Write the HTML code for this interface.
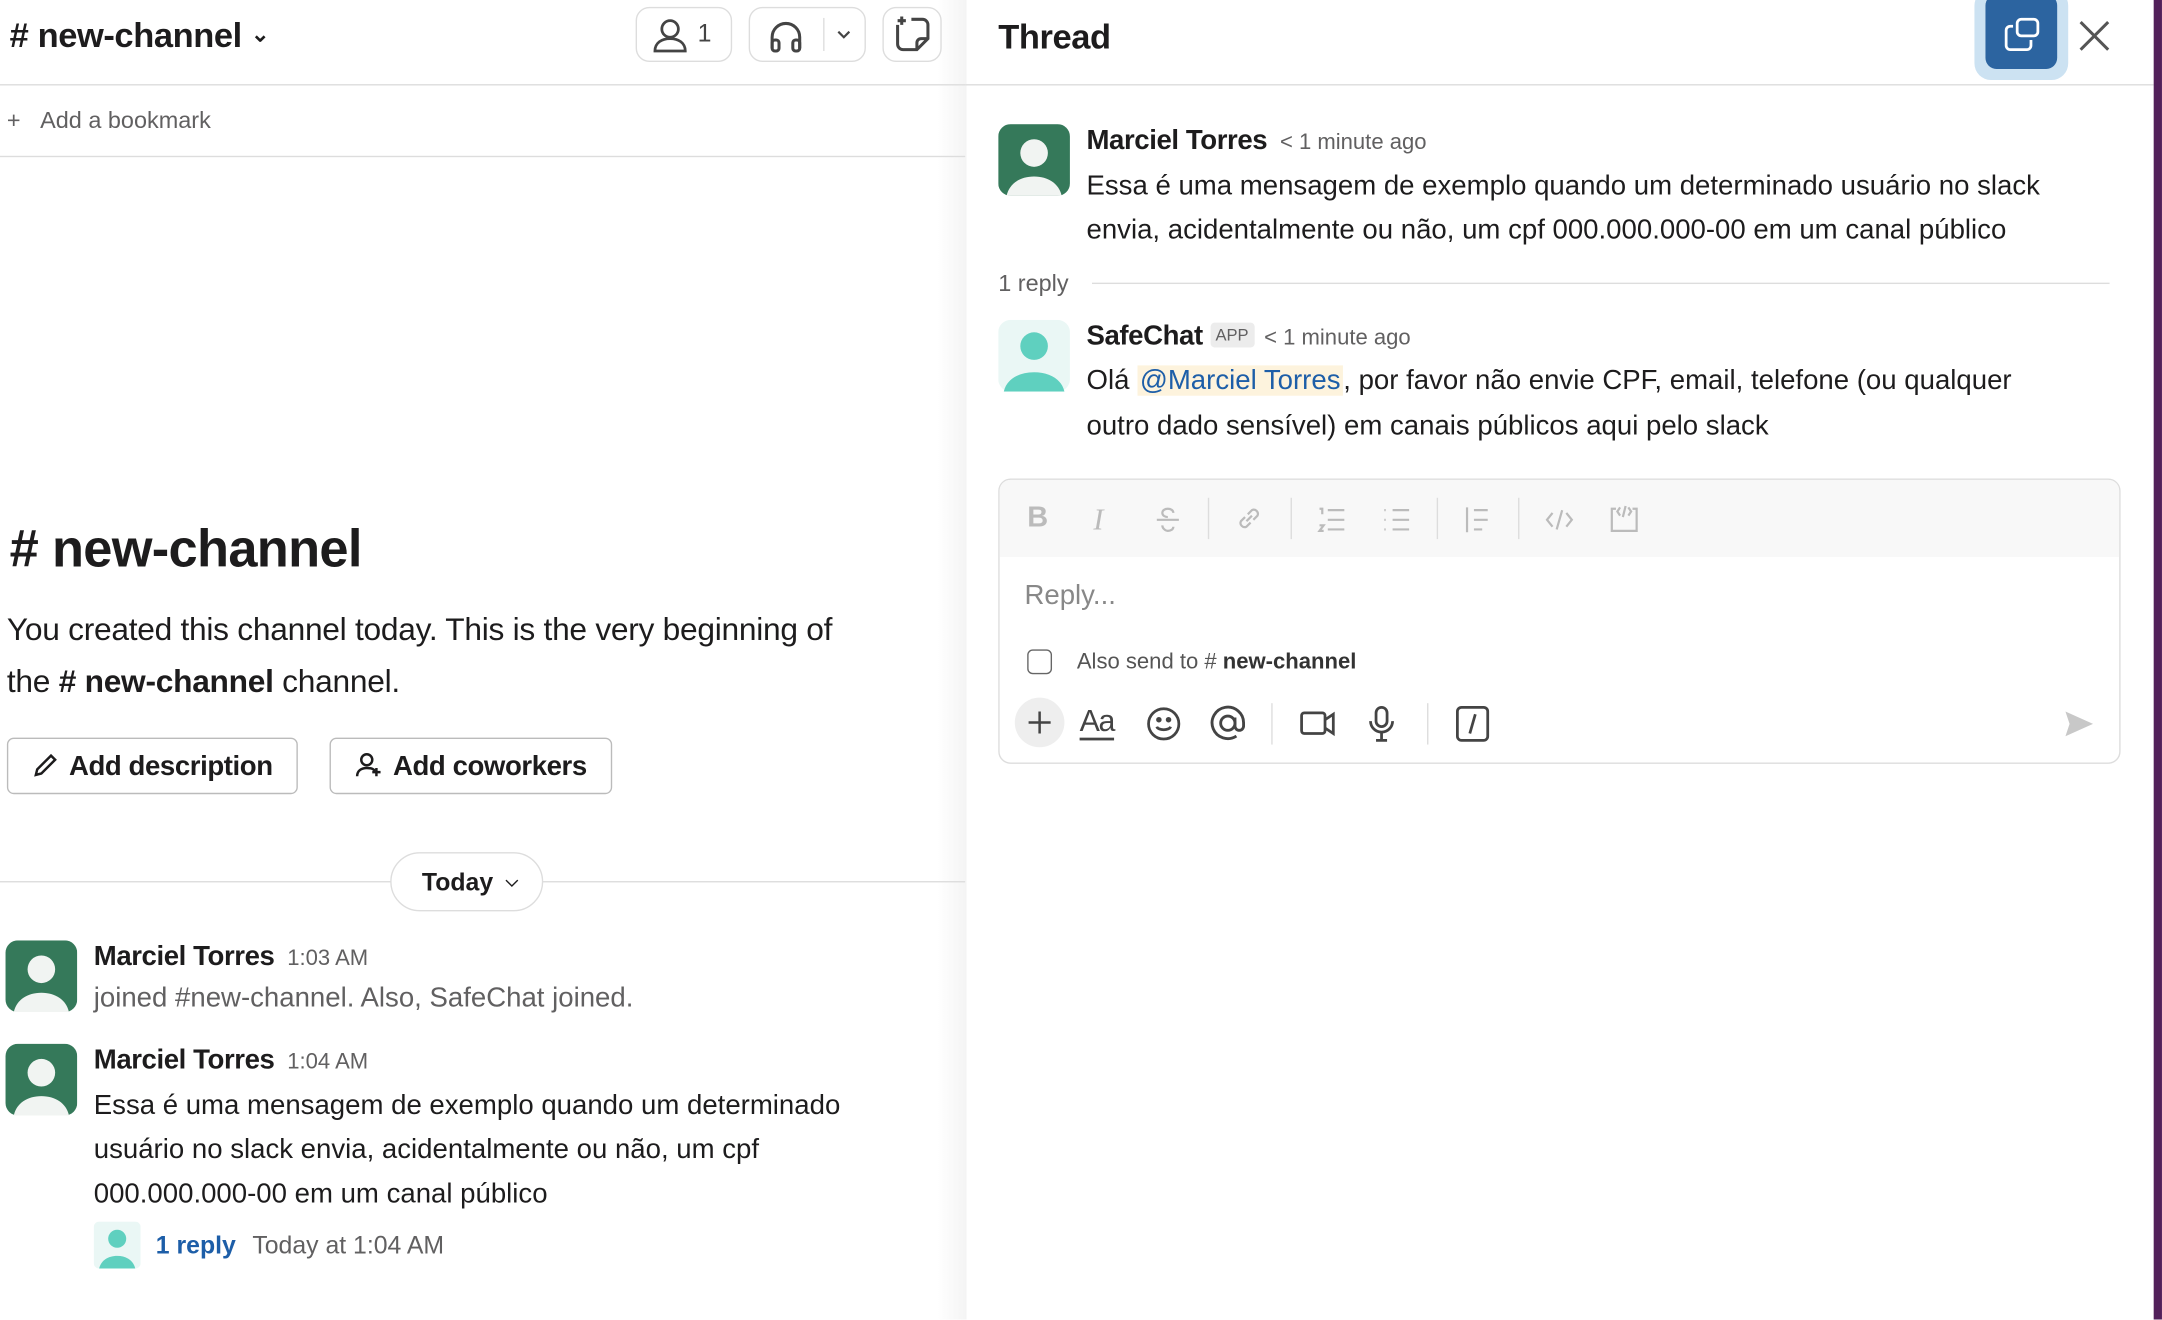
<!DOCTYPE html>
<html><head><meta charset="utf-8">
<style>
html,body{margin:0;padding:0;width:2162px;height:1320px;overflow:hidden;background:#fff}
#w{position:absolute;left:0;top:0;width:1568px;height:957px;transform:scale(1.3788);transform-origin:0 0;font-family:"Liberation Sans",sans-serif;color:#1d1c1d}
.a{position:absolute;white-space:nowrap}
.b{font-weight:bold}
.g{color:#616061}
.btn{position:absolute;border:1px solid #ddd;border-radius:10px;box-sizing:border-box}
.av{position:absolute}
</style></head><body><div id="w">
<div class="a" style="left:680px;top:0;width:21px;height:957px;background:linear-gradient(90deg,#fff,#f4f4f4)"></div>
<div class="a" style="left:0;top:61px;width:700px;height:1px;background:#ddd"></div>
<div class="a" style="left:0;top:113px;width:700px;height:1px;background:#ddd"></div>
<div class="a b" style="left:7px;top:12px;font-size:25px;letter-spacing:-0.3px">#&nbsp;new-channel <span style="font-size:16px;position:relative;top:-4px">&#x2304;</span></div>
<div class="btn" style="left:461px;top:5px;width:70px;height:40px"></div>
<svg class="a" style="left:472px;top:12px" width="28" height="28" viewBox="0 0 28 28" fill="none" stroke="#444" stroke-width="2"><circle cx="14" cy="9" r="6"/><path d="M3 25c0-6 5-9 11-9s11 3 11 9z"/></svg>
<div class="a" style="left:506px;top:14px;font-size:18px;color:#444">1</div>
<div class="btn" style="left:543px;top:5px;width:85px;height:40px"></div>
<svg class="a" style="left:555px;top:11px" width="30" height="30" viewBox="0 0 30 30" fill="none" stroke="#444" stroke-width="2.2"><path d="M5 24v-8a10 10 0 0 1 20 0v8"/><rect x="5" y="18" width="5" height="8" rx="2"/><rect x="20" y="18" width="5" height="8" rx="2"/></svg>
<div class="a" style="left:597px;top:13px;width:1px;height:24px;background:#ddd"></div>
<svg class="a" style="left:606px;top:20px" width="12" height="10" viewBox="0 0 12 10" fill="none" stroke="#444" stroke-width="1.6"><path d="M2 3l4 4 4-4"/></svg>
<div class="btn" style="left:640px;top:5px;width:43px;height:40px"></div>
<svg class="a" style="left:647px;top:10px" width="30" height="30" viewBox="0 0 30 30" fill="none" stroke="#444" stroke-width="2.2"><path d="M4 8v14a4 4 0 0 0 4 4h10l8-8V8a4 4 0 0 0-4-4h-8M18 26v-5a3 3 0 0 1 3-3h5M7 2v6M4 5h6"/></svg>
<div class="a g" style="left:5px;top:78px;font-size:17px">+&nbsp;&nbsp;&nbsp;Add a bookmark</div>
<div class="a b" style="left:7px;top:378px;font-size:38px;letter-spacing:-0.5px">#&nbsp;new-channel</div>
<div class="a" style="left:5px;top:437px;font-size:23px;line-height:38px;white-space:normal;width:690px;letter-spacing:-0.2px">You created this channel today. This is the very beginning of<br>the <b>#&nbsp;new-channel</b> channel.</div>
<div class="btn" style="left:5px;top:535px;width:211px;height:41px;border:1px solid #bbb;border-radius:5px"></div>
<svg class="a" style="left:23px;top:545px" width="20" height="20" viewBox="0 0 20 20" fill="none" stroke="#1d1c1d" stroke-width="1.8"><path d="M3 17l1-4L14 3l3 3L7 16z"/></svg>
<div class="a b" style="left:50px;top:545px;font-size:20px;letter-spacing:-0.3px">Add description</div>
<div class="btn" style="left:239px;top:535px;width:205px;height:41px;border:1px solid #bbb;border-radius:5px"></div>
<svg class="a" style="left:257px;top:544px" width="22" height="22" viewBox="0 0 22 22" fill="none" stroke="#1d1c1d" stroke-width="1.8"><circle cx="9" cy="7" r="4"/><path d="M2 19c0-4 3-6 7-6s5 1 6 2M16 13v6M13 16h6"/></svg>
<div class="a b" style="left:285px;top:545px;font-size:20px;letter-spacing:-0.3px">Add coworkers</div>
<div class="a" style="left:0;top:639px;width:700px;height:1px;background:#ddd"></div>
<div class="btn" style="left:283px;top:618px;width:111px;height:43px;border-radius:22px;background:#fff"></div>
<div class="a b" style="left:306px;top:630px;font-size:18px">Today <span style="font-size:12px;position:relative;top:-3px;margin-left:4px">&#x2335;</span></div>

<svg class="av" style="left:4px;top:682px" width="52" height="52" viewBox="0 0 52 52"><rect width="52" height="52" rx="9" fill="#35795a"/><circle cx="26" cy="21" r="10" fill="#f1f4f2"/><path d="M6 52c2-9 10-14 20-14s18 5 20 14z" fill="#f1f4f2"/></svg>
<div class="a b" style="left:68px;top:683px;font-size:20px;letter-spacing:-0.3px">Marciel Torres <span class="g" style="font-weight:normal;font-size:16px;margin-left:4px;letter-spacing:0">1:03 AM</span></div>
<div class="a g" style="left:68px;top:713px;font-size:20px">joined #new-channel. Also, SafeChat joined.</div>
<svg class="av" style="left:4px;top:757px" width="52" height="52" viewBox="0 0 52 52"><rect width="52" height="52" rx="9" fill="#35795a"/><circle cx="26" cy="21" r="10" fill="#f1f4f2"/><path d="M6 52c2-9 10-14 20-14s18 5 20 14z" fill="#f1f4f2"/></svg>
<div class="a b" style="left:68px;top:758px;font-size:20px;letter-spacing:-0.3px">Marciel Torres <span class="g" style="font-weight:normal;font-size:16px;margin-left:4px;letter-spacing:0">1:04 AM</span></div>
<div class="a" style="left:68px;top:786px;font-size:20px;line-height:32px;white-space:normal;width:600px">Essa é uma mensagem de exemplo quando um determinado usuário no slack envia, acidentalmente ou não, um cpf 000.000.000-00 em um canal público</div>
<svg class="av" style="left:68px;top:886px" width="34" height="34" viewBox="0 0 52 52"><rect width="52" height="52" rx="6" fill="#eaf7f5"/><circle cx="26" cy="19" r="10" fill="#5fd0bf"/><path d="M6 52c2-9 10-14 20-14s18 5 20 14z" fill="#5fd0bf"/></svg>
<div class="a b" style="left:113px;top:893px;font-size:18px;color:#1d5ea8">1 reply</div>
<div class="a g" style="left:183px;top:893px;font-size:18px">Today at 1:04 AM</div>

<div class="a" style="left:700px;top:61px;width:862px;height:1px;background:#ddd"></div>
<div class="a b" style="left:724px;top:13px;font-size:25px;letter-spacing:-0.3px">Thread</div>
<div class="a" style="left:1432px;top:-8px;width:68px;height:66px;border-radius:12px;background:#cce2f2"></div>
<div class="a" style="left:1440px;top:-4px;width:52px;height:54px;border-radius:8px;background:#2c64a0"></div>
<svg class="a" style="left:1452px;top:12px" width="28" height="26" viewBox="0 0 28 26" fill="none" stroke="#fff" stroke-width="2"><rect x="11" y="2" width="15" height="12" rx="3"/><path d="M8 7H6a3 3 0 0 0-3 3v11a3 3 0 0 0 3 3h12a3 3 0 0 0 3-3v-4"/></svg>
<svg class="a" style="left:1507px;top:14px" width="24" height="24" viewBox="0 0 24 24" stroke="#555" stroke-width="2.2"><path d="M2 2l20 20M22 2L2 22"/></svg>
<div class="a" style="left:1562px;top:0;width:6px;height:957px;background:#52205a"></div>

<svg class="av" style="left:724px;top:90px" width="52" height="52" viewBox="0 0 52 52"><rect width="52" height="52" rx="9" fill="#35795a"/><circle cx="26" cy="21" r="10" fill="#f1f4f2"/><path d="M6 52c2-9 10-14 20-14s18 5 20 14z" fill="#f1f4f2"/></svg>
<div class="a b" style="left:788px;top:91px;font-size:20px;letter-spacing:-0.3px">Marciel Torres <span class="g" style="font-weight:normal;font-size:16px;margin-left:4px;letter-spacing:0">&lt; 1 minute ago</span></div>
<div class="a" style="left:788px;top:119px;font-size:20px;line-height:32px;white-space:normal;width:735px">Essa é uma mensagem de exemplo quando um determinado usuário no slack envia, acidentalmente ou não, um cpf 000.000.000-00 em um canal público</div>
<div class="a g" style="left:724px;top:196px;font-size:17px">1 reply</div>
<div class="a" style="left:792px;top:205px;width:738px;height:1px;background:#ddd"></div>
<svg class="av" style="left:724px;top:232px" width="52" height="52" viewBox="0 0 52 52"><rect width="52" height="52" rx="9" fill="#eaf7f5"/><circle cx="26" cy="19" r="10" fill="#5fd0bf"/><path d="M4 52c2-9 11-14 22-14s20 5 22 14z" fill="#5fd0bf"/></svg>
<div class="a b" style="left:788px;top:233px;font-size:20px;letter-spacing:-0.3px">SafeChat <span style="font-weight:normal;font-size:12px;background:#ececec;color:#616061;padding:2px 4px;border-radius:3px;position:relative;top:-3px;letter-spacing:0">APP</span> <span class="g" style="font-weight:normal;font-size:16px;margin-left:2px;letter-spacing:0">&lt; 1 minute ago</span></div>
<div class="a" style="left:788px;top:260px;font-size:20px;line-height:33px;white-space:normal;width:720px">Olá <span style="color:#1d5ea8;background:#fdf3dd;padding:0 2px">@Marciel Torres</span>, por favor não envie CPF, email, telefone (ou qualquer outro dado sensível) em canais públicos aqui pelo slack</div>

<div class="a" style="left:724px;top:347px;width:814px;height:207px;border:1px solid #ddd;border-radius:9px;box-sizing:border-box;overflow:hidden">
<div style="height:56px;background:#f8f8f8"></div>
</div>
<div class="a" style="left:745px;top:364px;font-size:21px;color:#bbb;font-weight:bold">B</div>
<div class="a" style="left:793px;top:364px;font-size:22px;color:#bbb;font-style:italic;font-family:'Liberation Serif',serif">I</div>
<svg class="a" style="left:836px;top:366px" width="22" height="22" viewBox="0 0 22 22" fill="none" stroke="#bbb" stroke-width="1.6"><path d="M15 6c0-2-2-3-4-3s-4 1-4 3 2 3 4 3M3 11h16M7 15c0 2 2 4 4 4s4-1 4-3"/></svg>
<div class="a" style="left:876px;top:361px;width:1px;height:30px;background:#ddd"></div>
<svg class="a" style="left:895px;top:365px" width="22" height="22" viewBox="0 0 22 22" fill="none" stroke="#bbb" stroke-width="1.6"><path d="M9 13l4-4M8 10l-3 3a3 3 0 0 0 4 4l3-3M14 12l3-3a3 3 0 0 0-4-4l-3 3"/></svg>
<div class="a" style="left:936px;top:361px;width:1px;height:30px;background:#ddd"></div>
<svg class="a" style="left:955px;top:366px" width="22" height="22" viewBox="0 0 22 22" fill="none" stroke="#bbb" stroke-width="1.6"><path d="M8 4h12M8 11h12M8 18h12M2 3h2v4M2 15h3l-3 4h3"/></svg>
<svg class="a" style="left:1002px;top:366px" width="22" height="22" viewBox="0 0 22 22" fill="none" stroke="#bbb" stroke-width="1.6"><path d="M8 4h12M8 11h12M8 18h12M2 4h1M2 11h1M2 18h1"/></svg>
<div class="a" style="left:1042px;top:361px;width:1px;height:30px;background:#ddd"></div>
<svg class="a" style="left:1061px;top:366px" width="22" height="22" viewBox="0 0 22 22" fill="none" stroke="#bbb" stroke-width="1.6"><path d="M3 2v18M8 4h10M8 11h10M8 18h6"/></svg>
<div class="a" style="left:1101px;top:361px;width:1px;height:30px;background:#ddd"></div>
<svg class="a" style="left:1120px;top:366px" width="22" height="22" viewBox="0 0 22 22" fill="none" stroke="#bbb" stroke-width="1.6"><path d="M6 6l-4 5 4 5M16 6l4 5-4 5M13 4l-4 14"/></svg>
<svg class="a" style="left:1167px;top:365px" width="22" height="22" viewBox="0 0 22 22" fill="none" stroke="#bbb" stroke-width="1.6"><path d="M5 4H2v16h18V4h-3M8 3L6 6l2 3M14 3l2 3-2 3M12 2l-2 8"/></svg>
<div class="a" style="left:743px;top:421px;font-size:20px;color:#888">Reply...</div>
<div class="a" style="left:745px;top:471px;width:18px;height:18px;border:1.5px solid #666;border-radius:4px;box-sizing:border-box"></div>
<div class="a" style="left:781px;top:472px;font-size:16px;color:#555">Also send to # <b style="color:#333">new-channel</b></div>
<div class="a" style="left:736px;top:506px;width:36px;height:36px;border-radius:18px;background:#eee"></div>
<svg class="a" style="left:745px;top:515px" width="18" height="18" viewBox="0 0 18 18" stroke="#444" stroke-width="1.8"><path d="M9 1v16M1 9h16"/></svg>
<div class="a" style="left:783px;top:511px;font-size:22px;color:#444;border-bottom:2px solid #444;line-height:24px;letter-spacing:-1px">Aa</div>
<svg class="a" style="left:831px;top:512px" width="26" height="26" viewBox="0 0 26 26" fill="none" stroke="#444" stroke-width="2"><circle cx="13" cy="13" r="11"/><path d="M8 15c1 3 9 3 10 0"/><circle cx="9.5" cy="10" r="1" fill="#444"/><circle cx="16.5" cy="10" r="1" fill="#444"/></svg>
<svg class="a" style="left:877px;top:511px" width="27" height="27" viewBox="0 0 26 26" fill="none" stroke="#444" stroke-width="2"><circle cx="13" cy="13" r="5"/><path d="M18 9v6a3 3 0 0 0 6 0v-2a11 11 0 1 0-5 9"/></svg>
<div class="a" style="left:922px;top:510px;width:1px;height:30px;background:#ddd"></div>
<svg class="a" style="left:942px;top:512px" width="28" height="26" viewBox="0 0 28 26" fill="none" stroke="#444" stroke-width="2"><rect x="2" y="5" width="17" height="15" rx="2"/><path d="M19 10l6-4v14l-6-4"/></svg>
<svg class="a" style="left:991px;top:511px" width="22" height="28" viewBox="0 0 22 28" fill="none" stroke="#444" stroke-width="2"><rect x="7" y="2" width="8" height="14" rx="4"/><path d="M3 12a8 8 0 0 0 16 0M11 20v5M7 26h8"/></svg>
<div class="a" style="left:1035px;top:510px;width:1px;height:30px;background:#ddd"></div>
<svg class="a" style="left:1055px;top:511px" width="26" height="28" viewBox="0 0 26 28" fill="none" stroke="#444" stroke-width="2"><rect x="2" y="2" width="22" height="24" rx="3"/><path d="M15 7l-4 14"/></svg>
<svg class="a" style="left:1496px;top:514px" width="24" height="22" viewBox="0 0 24 22"><path d="M2 2l20 9-20 9 3-9z" fill="#c8c8c8"/></svg>
</div></body></html>
